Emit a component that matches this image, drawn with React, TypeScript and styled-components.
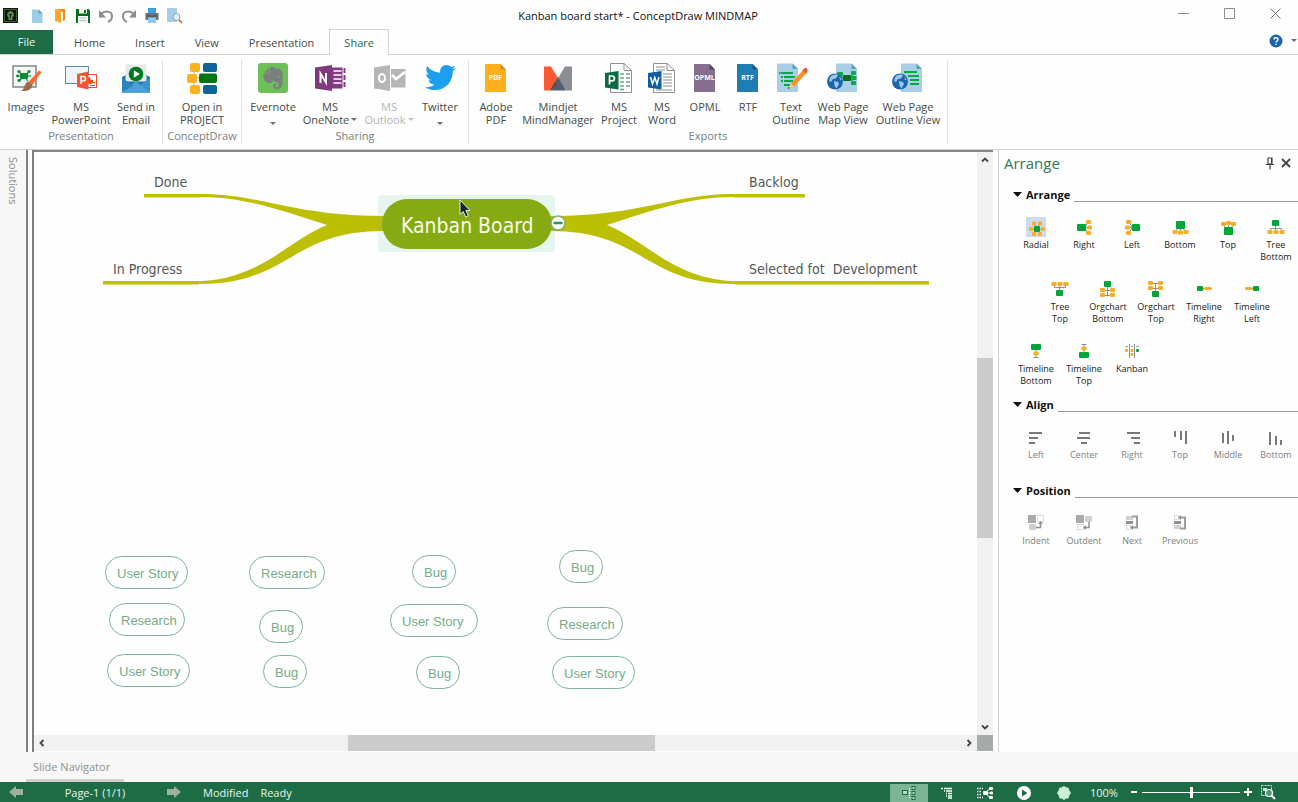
import React from "react";
import styled, { createGlobalStyle, css } from "styled-components";
import { FaEvernote, FaTwitter } from "react-icons/fa";

const GREEN = "#1d6c45";
const LEAF = "#00a637";
const AMBER = "#fbab26";
const INK = "#464a4a";

const GlobalStyle = createGlobalStyle`
  * { box-sizing: border-box; }
  body {
    margin: 0;
    font-family: "Open Sans", "Noto Sans", sans-serif;
    font-size: 11px;
    color: ${INK};
    background: #fdfefd;
  }
  button {
    font: inherit;
    color: inherit;
    background: none;
    border: 0;
    padding: 0;
    cursor: default;
  }
  svg { display: block; flex: none; }
`;

const Window = styled.div`
  display: flex;
  flex-direction: column;
  min-height: 100vh;
`;

/* ---------- title bar ---------- */

const TitleBar = styled.header`
  display: flex;
  height: 29px;
  flex: none;
`;

const QuickAccess = styled.div`
  display: flex;
  align-items: center;
  padding: 2px 0 0 2px;
`;

const QuickButton = styled.button`
  display: grid;
  place-items: center;
  width: 23px;
  height: 24px;
`;

const AppBadge = styled.div`
  margin-right: 6px;
`;

const Title = styled.h1`
  flex: 1;
  margin: 0;
  padding: 2px 70px 0 0;
  font-size: 11px;
  line-height: 27px;
  font-weight: 400;
  text-align: center;
  color: #111;
  white-space: nowrap;
`;

const CaptionButton = styled.button`
  display: grid;
  place-items: center;
  width: 46px;
  height: 27px;
`;

/* ---------- tabs ---------- */

const TabStrip = styled.nav`
  display: flex;
  flex: none;
  height: 26px;
  border-bottom: 1px solid #d2d4d4;
`;

const FileTab = styled.button`
  width: 53px;
  height: 24px;
  margin: 1px 6px 0 0;
  padding-bottom: 2px;
  background: ${GREEN};
  color: #eef6f0;
`;

const Tab = styled.button<{ $active?: boolean }>`
  height: 26px;
  padding: 0 14px 1px;
  border: 1px solid transparent;
  border-bottom: 0;
  ${(p) =>
    p.$active &&
    css`
      color: ${GREEN};
      border-color: #d2d4d4;
      background: #fdfefd;
    `}
`;

const HelpArea = styled.div`
  display: flex;
  align-items: center;
  gap: 8px;
  margin-left: auto;
  padding: 0 1px 2px 0;
`;

/* ---------- ribbon ---------- */

const Ribbon = styled.section`
  display: flex;
  flex: none;
  height: 95px;
  padding-top: 5px;
  border-bottom: 1px solid #cfd1d1;
`;

const Group = styled.div<{ $pad: number }>`
  display: flex;
  flex-direction: column;
  height: 84px;
  padding: 2px ${(p) => p.$pad}px 0;
  border-right: 1px solid #e0e2e2;
`;

const GroupItems = styled.div`
  display: flex;
  height: 67px;
`;

const GroupName = styled.div`
  line-height: 14px;
  text-align: center;
  color: #7b7e7e;
  white-space: nowrap;
`;

const Tool = styled.button<{ $width: number }>`
  display: flex;
  flex-direction: column;
  align-items: center;
  gap: 6px;
  width: ${(p) => p.$width}px;
  line-height: 13px;
  white-space: nowrap;
  &:disabled { color: #b4b6b6; }
`;

const ToolLine = styled.span`
  display: flex;
  align-items: center;
  justify-content: center;
  height: 13px;
  gap: 2px;
`;

const Caret = styled.i<{ $low?: boolean }>`
  border: 3px solid transparent;
  border-top-color: currentColor;
  border-bottom: 0;
  opacity: 0.8;
  margin-top: ${(p) => (p.$low ? 8 : 0)}px;
`;

/* ---------- workspace ---------- */

const Workspace = styled.main`
  display: flex;
  flex: 1;
  min-height: 0;
`;

const Solutions = styled.aside`
  width: 26px;
  padding: 7px 5px;
  background: #f6f7f6;
  writing-mode: vertical-rl;
  line-height: 16px;
  color: #8b8e8c;
`;

const Splitter = styled.div`
  width: 8px;
  flex: none;
  border: 2px solid #7d7f7e;
  border-top: 0;
  border-bottom: 0;
`;

const Editor = styled.div`
  display: grid;
  flex: 1;
  min-width: 0;
  grid-template-columns: minmax(0, 1fr) 16px;
  grid-template-rows: minmax(0, 1fr) 16px;
  border-top: 2px solid #858786;
  margin: 0 5px 1px 0;
`;

const Canvas = styled.div`
  position: relative;
  min-height: 583px;
  overflow: hidden;
`;

const MapDrawing = styled.svg`
  position: absolute;
  left: 66px;
  top: 28px;
`;

const Topic = styled.div<{ $x: number; $y: number }>`
  position: absolute;
  left: ${(p) => p.$x}px;
  top: ${(p) => p.$y}px;
  font-family: "DejaVu Sans Condensed", "DejaVu Sans", sans-serif;
  font-size: 14px;
  line-height: 18px;
  white-space: pre;
  color: #55595a;
`;

const RootTopic = styled(Topic)`
  font-size: 21px;
  line-height: 26px;
  color: #f5fbe6;
`;

const Card = styled.div<{ $x: number; $y: number; $w: number }>`
  position: absolute;
  left: ${(p) => p.$x}px;
  top: ${(p) => p.$y}px;
  width: ${(p) => p.$w}px;
  height: 33px;
  padding: 1px 0 0 11px;
  border: 1px solid #7fb397;
  border-radius: 17px;
  font-family: "Liberation Sans", Arial, sans-serif;
  font-size: 13px;
  line-height: 32px;
  white-space: nowrap;
  color: #76ac88;
`;

const Pointer = styled.svg`
  position: absolute;
  left: 425px;
  top: 47px;
`;

const ScrollTrack = styled.div<{ $vertical?: boolean }>`
  display: flex;
  flex-direction: ${(p) => (p.$vertical ? "column" : "row")};
  background: #f1f1f1;
`;

const ScrollArrow = styled.button`
  display: grid;
  place-items: center;
  width: 16px;
  height: 16px;
`;

const ScrollSpace = styled.div<{ $grow: number }>`
  flex: ${(p) => p.$grow} 0 0;
`;

const ScrollThumb = styled.div<{ $grow: number }>`
  flex: ${(p) => p.$grow} 0 0;
  background: #cccccc;
`;

const Corner = styled.div`
  background: #a7aba7;
`;

/* ---------- arrange panel ---------- */

const Panel = styled.aside`
  width: 300px;
  flex: none;
  overflow: hidden;
  border-left: 1px solid #cfd1d0;
`;

const PanelHead = styled.div`
  display: flex;
  align-items: center;
  gap: 6px;
  height: 26px;
  margin-bottom: 9px;
  padding: 0 7px 0 5px;
`;

const PanelTitle = styled.h2`
  flex: 1;
  margin: 0;
  font-size: 15px;
  font-weight: 400;
  color: #33785a;
`;

const Section = styled.section`
  margin-bottom: 8px;
`;

const SectionHead = styled.h3`
  display: flex;
  align-items: center;
  gap: 4px;
  height: 18px;
  margin: 0 0 14px;
  padding-left: 14px;
  font-size: 11px;
  font-weight: 700;
  color: #111;
  &::after {
    content: "";
    flex: 1;
    align-self: flex-end;
    height: 1px;
    margin-bottom: 1px;
    background: #989a99;
  }
`;

const Rows = styled.div`
  display: flex;
  flex-direction: column;
  gap: 16px;
`;

const Row = styled.div<{ $indent?: boolean }>`
  display: flex;
  padding-left: ${(p) => (p.$indent ? 37 : 13)}px;
`;

const Choice = styled.button<{ $muted?: boolean }>`
  display: flex;
  flex: none;
  flex-direction: column;
  align-items: center;
  gap: 2px;
  width: 48px;
  min-height: 46px;
  font-size: 9px;
  line-height: 12px;
  white-space: pre-line;
  color: ${(p) => (p.$muted ? "#7d807f" : "#222")};
`;

/* ---------- bottom ---------- */

const Tray = styled.div`
  display: flex;
  flex: none;
  height: 30px;
  padding-left: 26px;
  background: #f6f7f6;
`;

const TrayTab = styled.button`
  height: 30px;
  padding: 1px 14px 0 7px;
  border-bottom: 3px solid #cfd1d0;
  color: #8f9291;
  line-height: 25px;
`;

const StatusBar = styled.footer`
  display: flex;
  align-items: center;
  flex: none;
  height: 20px;
  padding: 0 22px 0 9px;
  background: ${GREEN};
  color: #eaf4ee;
  white-space: nowrap;
`;

const PageName = styled.span`
  width: 144px;
  text-align: center;
`;

const StatusMessages = styled.div`
  display: flex;
  gap: 12px;
  margin-left: 22px;
`;

const StatusTools = styled.div`
  display: flex;
  align-items: center;
  margin-left: auto;
`;

const ViewButton = styled.button<{ $active?: boolean; $wide?: boolean }>`
  display: grid;
  place-items: center;
  width: ${(p) => (p.$wide ? 40 : 38)}px;
  height: 18px;
  margin-top: 2px;
  background: ${(p) => (p.$active ? "#7cb595" : "none")};
`;

const ZoomValue = styled.output`
  width: 38px;
  margin-left: 6px;
`;

const ZoomStep = styled.button`
  display: grid;
  place-items: center;
  width: 12px;
  height: 20px;
`;

const ZoomSlider = styled.input`
  appearance: none;
  width: 98px;
  height: 12px;
  margin: 0 2px;
  background: linear-gradient(#fff, #fff) center / 100% 1px no-repeat;
  &::-webkit-slider-thumb {
    appearance: none;
    width: 3px;
    height: 11px;
    background: #fff;
  }
`;

const FitButton = styled.button`
  margin-left: 6px;
`;

/* ---------- ribbon icons ---------- */

const Art = ({ children }: { children: React.ReactNode }) => (
  <svg width="36" height="32" viewBox="0 0 36 32" aria-hidden="true">
    {children}
  </svg>
);

const IconImages = () => (
  <Art>
    <rect x="5" y="4" width="23" height="21" fill="#f4f6f5" stroke="#8b8e8e" strokeWidth="1.6" />
    <g stroke="#0c8a34" strokeWidth="1.2" fill="#0c8a34">
      <path d="M10 9.500l6 4.500M22 9l-6 5M9 14h14M11 19l5-5M20 19l-4-5" />
      <rect x="12.500" y="11.500" width="7" height="5" rx="1" />
      <circle cx="11" cy="9.500" r="1" />
      <circle cx="21" cy="9.500" r="1" />
      <circle cx="11" cy="18.500" r="1" />
      <circle cx="9.500" cy="14" r=".8" />
    </g>
    <path d="M31 8.500l2.500 1.500-9 13-4-3z" fill="#ff6a33" />
    <path d="M20.500 19.500l4 3.500c-1 5-5 6.500-11.500 6 4-2 3-8 7.500-9.500z" fill="#9a6a4c" />
  </Art>
);

const IconPowerPoint = () => (
  <Art>
    <rect x="2.500" y="4.500" width="23" height="17" fill="#eef4fa" stroke="#4d8fa8" />
    <rect x="24" y="12.500" width="9.500" height="13" fill="#fff" stroke="#e8512b" />
    <path d="M27 15.500a3 3 0 103 3h-3zM27 23.500h5M29 20.500h3" fill="#e8512b" stroke="#e8512b" />
    <path d="M14 12l11.500-2.500v18L14 25z" fill="#fb5430" />
    <path d="M18 22v-7.500h2.200a2.200 2.200 0 010 4.500H18" fill="none" stroke="#fff" strokeWidth="1.500" />
  </Art>
);

const IconEmail = () => (
  <Art>
    <path d="M4 15L18 8l14 7v15.500H4z" fill="#1f74ad" />
    <path d="M7.500 2.500h21v17H7.500z" fill="#e4e9ea" />
    <path d="M4 16l14 9.500L32 16v14.500H4z" fill="#3b93cd" />
    <path d="M4 30.500l14-11 14 11z" fill="#4aa0d8" />
    <path d="M4 16l11 7.500-11 7z" fill="#2b84be" />
    <circle cx="18" cy="12" r="7.300" fill="#007a1d" />
    <path d="M15.800 8.300v7.400l6-3.700z" fill="#fff" />
  </Art>
);

const IconOpenProject = () => (
  <Art>
    <path d="M10 9v4M12 16h4M10 20v4" stroke="#a8b8a0" />
    <g fill="#fdb022">
      <rect x="6" y="1" width="10" height="9" rx="2" />
      <rect x="3" y="12" width="10" height="9" rx="2" />
      <rect x="6" y="23" width="10" height="9" rx="2" />
    </g>
    <g fill="#0e6499">
      <rect x="19" y="1" width="14" height="9" rx="2" />
      <rect x="19" y="23" width="14" height="9" rx="2" />
    </g>
    <rect x="15" y="11.500" width="18" height="9.500" rx="2" fill="#007512" />
  </Art>
);

const IconEvernote = () => (
  <Art>
    <rect x="3" y="1" width="30" height="30" rx="3" fill="#6dbf58" />
    <FaEvernote x="5" y="3" size={26} color="#7a807d" />
  </Art>
);

const IconOneNote = () => (
  <Art>
    <path d="M20 5.500h10.500v21H20z" fill="#843a87" />
    <path d="M21.500 9h8M21.500 13h8M21.500 17h8M21.500 21h8" stroke="#fff" strokeWidth="1.700" />
    <path d="M31.500 6h2v5h-2zM31.500 13h2v5h-2zM31.500 20h2v5h-2z" fill="#843a87" />
    <path d="M3 5.500L20 3v26L3 26.500z" fill="#80397f" />
    <path d="M8.500 21v-9.500l5.500 9v-9.500" fill="none" stroke="#fff" strokeWidth="2" />
  </Art>
);

const IconOutlook = () => (
  <Art>
    <path d="M20 7h14.500v18.500H20z" fill="#b5b7b6" />
    <path d="M21 13l4 4 9-7" fill="none" stroke="#fff" strokeWidth="2.500" />
    <path d="M3 5.500L19 3v26L3 26.500z" fill="#b5b7b6" />
    <ellipse cx="11" cy="16" rx="3" ry="4" fill="none" stroke="#fff" strokeWidth="2" />
  </Art>
);

const IconTwitter = () => (
  <Art>
    <FaTwitter x="3" y="0" size={31} color="#1d9ff0" />
  </Art>
);

const Badge = styled.text`
  font-family: "Open Sans", sans-serif;
  font-weight: 700;
  text-anchor: middle;
  fill: #fff;
`;

const IconFile = ({ name, fill, fold }: { name: string; fill: string; fold: string }) => (
  <Art>
    <path d="M7 2h15.500l5.500 5.500V30H7z" fill={fill} />
    <path d="M22.500 2v5.500H28z" fill={fold} />
    <Badge x="17.500" y="18" fontSize="7">
      {name}
    </Badge>
  </Art>
);

const IconMindjet = () => (
  <Art>
    <path d="M4 4.500h7L18 16 10 28.500H4z" fill="#fb5a32" />
    <path d="M32 4.500h-7L18 16l8 12.500h6z" fill="#8b8f93" />
    <path d="M18 15l8 13.500H10z" fill="#50606c" />
    <path d="M14.500 20l3.500 3-8 5.500z" fill="#6a4b4b" />
  </Art>
);

const OfficePage = ({ fill, children }: { fill: string; children: React.ReactNode }) => (
  <Art>
    <path d="M9.500 1.500H23l7.500 7v22h-21z" fill="#fff" stroke="#8d9190" />
    <path d="M23 1.500v7h7.500" fill="none" stroke="#8d9190" />
    <path d="M4 11l13.500-2v18.500L4 25.500z" fill={fill} />
    {children}
  </Art>
);

const IconProject = () => (
  <OfficePage fill="#0a6b41">
    <path d="M19 12h4M25 12h4M19 16h4M25 16h4M19 20h4M25 20h4M19 24h4M25 24h4M19 27.500h4" stroke="#6aa98a" strokeWidth="1.400" />
    <path d="M8.500 22.500v-8.500h2.500a2.300 2.300 0 010 4.800H8.500" fill="none" stroke="#fff" strokeWidth="1.700" />
  </OfficePage>
);

const IconWord = () => (
  <OfficePage fill="#0d5ea0">
    <path d="M12 5h9M12 8h9M19 12h9M19 15h9M19 18h9M19 21h9M19 24h9M12 28h16" stroke="#8d9190" strokeWidth="1.200" />
    <path d="M6.500 15l2 7 2.300-6.500 2.200 6.500 2-7" fill="none" stroke="#fff" strokeWidth="1.500" />
  </OfficePage>
);

const Page = ({ x }: { x: number }) => (
  <g transform={`translate(${x} 0)`}>
    <path d="M0 1.500h15.500l5.500 5.500V30H0z" fill="#a9cfe6" />
    <path d="M15.500 1.500V7H21z" fill="#5f9fc4" />
  </g>
);

const Globe = () => (
  <g>
    <circle cx="10" cy="19.500" r="8" fill="#1a66ac" />
    <path d="M5 15.500c2-3 5-3.500 8-2.500l-2 3.500-3 .5-2 3-2-1zM9 19l4 1 1 2-2.500 4.500-2-3zM14.500 14.500l2 3-1.500 1z" fill="#9cc7e8" />
  </g>
);

const IconTextOutline = () => (
  <Art>
    <Page x={4} />
    <path d="M8 11h12M11 15h11M11 19h9M11 23h7" stroke="#0ca545" strokeWidth="2" />
    <path d="M6 11h1.500M8 15h2M8 19h2" stroke="#0ca545" strokeWidth="2" />
    <path d="M18 21.500L31 7l3.500 3L21 24.500l-6 2.500z" fill="#f89423" />
    <path d="M29.500 8.500L31.500 6c1.500-1 4 1 3 3l-2 2.500z" fill="#ef5a45" />
    <path d="M18 21.500l3 3-6.500 2.500z" fill="#f3cf9a" />
    <path d="M15.600 24.800l1.400 1.300-2.500.9z" fill="#444" />
  </Art>
);

const IconWebMap = () => (
  <Art>
    <Page x={11} />
    <path d="M18 16l-3-4M25 16l4-5M25 16h5M25 16l4 5" stroke="#0a7a2a" />
    <g fill="#0ca545">
      <rect x="12" y="10" width="6" height="4" rx="1" />
      <rect x="26" y="9" width="5" height="4" rx="1" />
      <rect x="26.500" y="14" width="5" height="4" rx="1" />
      <rect x="26" y="19" width="5" height="4" rx="1" />
    </g>
    <rect x="18" y="13" width="8" height="6" rx="1" fill="#00701b" />
    <Globe />
  </Art>
);

const IconWebOutline = () => (
  <Art>
    <Page x={11} />
    <path d="M14 10h13M18 14h11M20 18h9M20 22h9" stroke="#0ca545" strokeWidth="1.800" />
    <Globe />
  </Art>
);

/* ---------- panel icons ---------- */

const SmallArt = ({ bg, children }: { bg?: string; children: React.ReactNode }) => (
  <svg width="20" height="20" viewBox="0 0 20 20" aria-hidden="true">
    {bg && <rect width="20" height="20" fill={bg} />}
    {children}
  </svg>
);

type Rect = [number, number, number, number];

const Diagram = ({
  root,
  nodes,
  lines,
  bg,
  size = [5, 4],
}: {
  root: Rect;
  nodes: [number, number][];
  lines: string;
  bg?: string;
  size?: [number, number];
}) => (
  <SmallArt bg={bg}>
    <path d={lines} stroke="#8b918f" fill="none" />
    <rect x={root[0]} y={root[1]} width={root[2]} height={root[3]} rx="1" fill={LEAF} />
    {nodes.map(([x, y], i) => (
      <rect key={i} x={x - size[0] / 2} y={y - size[1] / 2} width={size[0]} height={size[1]} rx="1.200" fill={AMBER} />
    ))}
  </SmallArt>
);

const layouts: { name: string; icon: React.ReactNode }[][] = [
  [
    {
      name: "Radial",
      icon: (
        <Diagram
          bg="#cbdcf0"
          root={[8, 9, 6, 6]}
          size={[4, 4]}
          nodes={[[8, 6.5], [14, 6.5], [5, 12], [17, 12], [8, 17], [14, 17]]}
          lines="M8 6l6 12M14 6L8 18M4 12h14"
        />
      ),
    },
    { name: "Right", icon: <Diagram root={[3, 7, 9, 7]} nodes={[[14.5, 5], [15.5, 10.5], [14.5, 16]]} lines="M11 10l3-5M11 10.500h5M11 11l3 5" /> },
    { name: "Left", icon: <Diagram root={[10, 7, 8, 7]} nodes={[[6.5, 5], [5.5, 10.5], [6.5, 16]]} lines="M10 10L7 5M10 10.500H5M10 11l-3 5" /> },
    { name: "Bottom", icon: <Diagram root={[6, 4, 9, 8]} nodes={[[5, 15], [10.5, 15.5], [16, 15]]} lines="M8 11l-3 4M10.500 11v4M13 11l3 4" /> },
    { name: "Top", icon: <Diagram root={[6, 10, 9, 8]} nodes={[[5.5, 7], [10.5, 6], [15.5, 7]]} lines="M8 11L5 7M10.500 11V6M13 11l3-4" /> },
    { name: "Tree\nBottom", icon: <Diagram root={[6, 3, 7, 6]} nodes={[[4, 15], [10, 15], [16, 15]]} lines="M9.500 8v7M4.500 14v-2.500h11V14" /> },
  ],
  [
    { name: "Tree\nTop", icon: <Diagram root={[6, 11, 7, 6]} nodes={[[4, 5], [10, 5], [16, 5]]} lines="M9.500 12V5M4.500 6v2.500h11V6" /> },
    { name: "Orgchart\nBottom", icon: <Diagram root={[6, 2, 7, 6]} nodes={[[4.5, 11], [14.5, 11], [4.5, 16], [14.5, 16]]} lines="M9.500 7v9.500M5 11.500h9M5 16.500h9" /> },
    { name: "Orgchart\nTop", icon: <Diagram root={[6, 12, 7, 6]} nodes={[[4.5, 4], [14.5, 4], [4.5, 9], [14.5, 9]]} lines="M9.500 13V4M5 4.500h9M5 9.500h9" /> },
    { name: "Timeline\nRight", icon: <Diagram root={[3, 7, 6, 5]} size={[4, 3]} nodes={[[12, 9.5], [15.5, 9.5]]} lines="M9 9.500h9" /> },
    { name: "Timeline\nLeft", icon: <Diagram root={[11, 7, 6, 5]} size={[4, 3]} nodes={[[8.5, 9.5], [5, 9.5]]} lines="M11 9.500H3" /> },
  ],
  [
    { name: "Timeline\nBottom", icon: <Diagram root={[5, 3, 10, 6]} nodes={[[10, 12.5]]} lines="M10 9v8M7.500 16.500h5" /> },
    { name: "Timeline\nTop", icon: <Diagram root={[5, 11, 10, 6]} nodes={[[10, 7.5]]} lines="M10 11V3M7.500 3.500h5" /> },
    {
      name: "Kanban",
      icon: (
        <SmallArt>
          <path d="M7.500 3v14M12.500 3v14" stroke="#8b918f" />
          <path d="M3 5.500h3M9 5.500h2M14 5.500h3" stroke="#9aa09e" />
          <g fill={AMBER}>
            <rect x="3" y="8" width="3" height="3" rx="1" />
            <rect x="8.500" y="8" width="3" height="3" rx="1" />
            <rect x="8.500" y="12" width="3" height="3" rx="1" />
          </g>
          <rect x="14" y="8" width="3" height="3" rx="1" fill={LEAF} />
        </SmallArt>
      ),
    },
  ],
];

const Bars = ({ d }: { d: string }) => (
  <SmallArt>
    <path d={d} stroke="#757978" strokeWidth="2" />
  </SmallArt>
);

const alignments = [
  { name: "Left", d: "M3 6h13M3 11h9M3 16h6" },
  { name: "Center", d: "M5 6h11M3 11h13M7 16h6" },
  { name: "Right", d: "M5 6h13M9 11h9M12 16h6" },
  { name: "Top", d: "M5 4v6M11 4v9M16 4v13" },
  { name: "Middle", d: "M5 6v10M10 4v13M15 8v6" },
  { name: "Bottom", d: "M4 5v13M10 9v9M15 13v5" },
];

const positions = [
  {
    name: "Indent",
    icon: (
      <SmallArt>
        <rect x="2" y="2" width="8" height="8" fill="#a9acab" />
        <rect x="11.500" y="2.500" width="6" height="6" fill="none" stroke="#b9bcbb" strokeDasharray="1 1" />
        <rect x="3" y="11" width="7" height="6" rx="1" fill="#cfd1d0" />
        <path d="M10 14.500h4.500V9" fill="none" stroke="#8e9190" strokeWidth="1.500" />
        <path d="M12 11l2.500-3 2.500 3z" fill="#8e9190" />
      </SmallArt>
    ),
  },
  {
    name: "Outdent",
    icon: (
      <SmallArt>
        <rect x="2" y="2" width="8" height="8" fill="#a9acab" />
        <rect x="11" y="3" width="7" height="6" rx="1" fill="#cfd1d0" />
        <rect x="3.500" y="11.500" width="6" height="5" fill="none" stroke="#b9bcbb" strokeDasharray="1 1" />
        <path d="M15 9v5.500h-4" fill="none" stroke="#8e9190" strokeWidth="1.500" />
        <path d="M12 12l-3 2.500 3 2.500z" fill="#8e9190" />
      </SmallArt>
    ),
  },
  {
    name: "Next",
    icon: (
      <SmallArt>
        <rect x="4" y="3" width="7" height="4" rx="1" fill="#cfd1d0" />
        <rect x="4" y="8" width="7" height="3" fill="#8e9190" />
        <rect x="4.500" y="12.500" width="4" height="4" fill="none" stroke="#b9bcbb" strokeDasharray="1 1" />
        <path d="M10 3.500h5v11h-5" fill="none" stroke="#9a9d9c" strokeWidth="2" />
        <path d="M11 12l-3 2.500 3 2.500z" fill="#8e9190" />
      </SmallArt>
    ),
  },
  {
    name: "Previous",
    icon: (
      <SmallArt>
        <rect x="4.500" y="2.500" width="4" height="4" fill="none" stroke="#b9bcbb" strokeDasharray="1 1" />
        <rect x="4" y="8" width="7" height="3" fill="#8e9190" />
        <rect x="4" y="12" width="7" height="4" rx="1" fill="#cfd1d0" />
        <path d="M10 4.500h5v11h-5" fill="none" stroke="#9a9d9c" strokeWidth="2" />
        <path d="M11 2L8 4.500 11 7z" fill="#8e9190" />
      </SmallArt>
    ),
  },
];

/* ---------- title bar icons ---------- */

const Mini = ({ label, children }: { label: string; children: React.ReactNode }) => (
  <QuickButton aria-label={label}>
    <svg width="16" height="16" viewBox="0 0 16 16">
      {children}
    </svg>
  </QuickButton>
);

/* ---------- ribbon data ---------- */

type ToolItem = {
  lines: string[];
  width: number;
  icon: React.ReactNode;
  menu?: "below" | "inline";
  disabled?: boolean;
};

const groups: { name: string; pad: number; items: ToolItem[] }[] = [
  {
    name: "Presentation",
    pad: 1,
    items: [
      { lines: ["Images"], width: 50, icon: <IconImages /> },
      { lines: ["MS", "PowerPoint"], width: 60, icon: <IconPowerPoint /> },
      { lines: ["Send in", "Email"], width: 50, icon: <IconEmail /> },
    ],
  },
  {
    name: "ConceptDraw",
    pad: 4,
    items: [{ lines: ["Open in", "PROJECT"], width: 70, icon: <IconOpenProject /> }],
  },
  {
    name: "Sharing",
    pad: 5,
    items: [
      { lines: ["Evernote"], width: 52, icon: <IconEvernote />, menu: "below" },
      { lines: ["MS", "OneNote"], width: 62, icon: <IconOneNote />, menu: "inline" },
      { lines: ["MS", "Outlook"], width: 56, icon: <IconOutlook />, menu: "inline", disabled: true },
      { lines: ["Twitter"], width: 46, icon: <IconTwitter />, menu: "below" },
    ],
  },
  {
    name: "Exports",
    pad: 4,
    items: [
      { lines: ["Adobe", "PDF"], width: 46, icon: <IconFile name="PDF" fill="#fdb01c" fold="#d08c3a" /> },
      { lines: ["Mindjet", "MindManager"], width: 78, icon: <IconMindjet /> },
      { lines: ["MS", "Project"], width: 44, icon: <IconProject /> },
      { lines: ["MS", "Word"], width: 42, icon: <IconWord /> },
      { lines: ["OPML"], width: 44, icon: <IconFile name="OPML" fill="#846f90" fold="#52455c" /> },
      { lines: ["RTF"], width: 42, icon: <IconFile name="RTF" fill="#1f7db3" fold="#125a86" /> },
      { lines: ["Text", "Outline"], width: 44, icon: <IconTextOutline /> },
      { lines: ["Web Page", "Map View"], width: 60, icon: <IconWebMap /> },
      { lines: ["Web Page", "Outline View"], width: 70, icon: <IconWebOutline /> },
    ],
  },
];

const cards: { text: string; x: number; y: number; w: number }[] = [
  { text: "User Story", x: 71, y: 404, w: 83 },
  { text: "Research", x: 75, y: 451, w: 76 },
  { text: "User Story", x: 73, y: 502, w: 83 },
  { text: "Research", x: 215, y: 404, w: 76 },
  { text: "Bug", x: 225, y: 458, w: 44 },
  { text: "Bug", x: 229, y: 503, w: 44 },
  { text: "Bug", x: 378, y: 403, w: 44 },
  { text: "User Story", x: 356, y: 452, w: 88 },
  { text: "Bug", x: 382, y: 504, w: 44 },
  { text: "Bug", x: 525, y: 398, w: 44 },
  { text: "Research", x: 513, y: 455, w: 76 },
  { text: "User Story", x: 518, y: 504, w: 83 },
];

const Chevron = ({ turn }: { turn: number }) => (
  <svg width="10" height="10" viewBox="0 0 10 10">
    <path d="M2 3.500l3 3 3-3" fill="none" stroke="#444" strokeWidth="1.800" transform={`rotate(${turn} 5 5)`} />
  </svg>
);

const branch =
  "M194 194h6C262 194 292 216 384 216V231C290 231 290 284 200 284h-7v-2.500C260 281 285 242 327 225 280 210 245 197 200 197h-6z";

export default function App() {
  return (
    <>
      <GlobalStyle />
      <Window>
        <TitleBar>
          <QuickAccess>
            <AppBadge>
              <svg width="17" height="16" viewBox="0 0 17 16">
                <rect x="1" width="15" height="15" fill="#10150f" />
                <rect x="2.500" y="1.500" width="12" height="12" fill="none" stroke="#3f5f35" />
                <path d="M8.500 3a3.500 3.500 0 00-2 6.300V12h4V9.300A3.500 3.500 0 008.500 3z" fill="#5f8f3d" />
                <path d="M7 6.500h3M8.500 6.500V10" stroke="#10150f" />
              </svg>
            </AppBadge>
            <Mini label="New">
              <path d="M3 1.500h6.500l4 4V15H3z" fill="#9fcce6" />
              <path d="M9.500 1.500v4h4z" fill="#5f9fc4" />
            </Mini>
            <Mini label="Open">
              <path d="M3 1h10v11l-2 1V4z" fill="#f08a12" />
              <path d="M3 1l6 2.500V15L3 13z" fill="#fda728" />
            </Mini>
            <Mini label="Save">
              <path d="M1 1h12.500l1.500 1.500V15H1z" fill="#02701d" />
              <path d="M4 1h8v4.500H4z" fill="#f4f6f5" />
              <path d="M9 2h2v3H9z" fill="#02701d" />
              <path d="M3 8h10v7H3z" fill="#f4f6f5" />
              <path d="M4.500 10h7M4.500 12.500h7" stroke="#b9bcbb" />
            </Mini>
            <Mini label="Undo">
              <path d="M3 6c4-4 11-3 11 2 0 3-1.500 5-4 6" fill="none" stroke="#8b8e8e" strokeWidth="2" />
              <path d="M1 2v7.500h7z" fill="#8b8e8e" />
            </Mini>
            <Mini label="Redo">
              <path d="M13 6C9 2 2 3 2 8c0 3 1.500 5 4 6" fill="none" stroke="#8b8e8e" strokeWidth="2" />
              <path d="M15 2v7.500H8z" fill="#8b8e8e" />
            </Mini>
            <Mini label="Print">
              <path d="M4 0h8v5H4z" fill="#3fa0df" />
              <path d="M1.500 5h13v7h-13z" fill="#6d7276" />
              <path d="M4 9.500h8V15H4z" fill="#8ccbf0" />
              <path d="M2 8h12" stroke="#4b5054" />
            </Mini>
            <Mini label="Preview">
              <path d="M0 0h10v14H0z" fill="#a3cfe9" />
              <circle cx="9.500" cy="9" r="3.500" fill="#eaf5fb" stroke="#7f9fae" />
              <path d="M12 12l3 3" stroke="#c98332" strokeWidth="2" />
            </Mini>
          </QuickAccess>
          <Title>Kanban board start* - ConceptDraw MINDMAP</Title>
          <CaptionButton aria-label="Minimize">
            <svg width="11" height="11" viewBox="0 0 11 11">
              <path d="M0 5.500h11" stroke="#8b8e8e" />
            </svg>
          </CaptionButton>
          <CaptionButton aria-label="Maximize">
            <svg width="11" height="11" viewBox="0 0 11 11">
              <path d="M.5.5h10v10H.5z" fill="none" stroke="#8b8e8e" />
            </svg>
          </CaptionButton>
          <CaptionButton aria-label="Close">
            <svg width="11" height="11" viewBox="0 0 11 11">
              <path d="M.5.5l10 10M10.500.5l-10 10" stroke="#777a7a" />
            </svg>
          </CaptionButton>
        </TitleBar>

        <TabStrip>
          <FileTab>File</FileTab>
          <Tab>Home</Tab>
          <Tab>Insert</Tab>
          <Tab>View</Tab>
          <Tab>Presentation</Tab>
          <Tab $active>Share</Tab>
          <HelpArea>
            <button aria-label="Help">
              <svg width="14" height="14" viewBox="0 0 14 14">
                <circle cx="7" cy="7" r="6.500" fill="#1c62ad" />
                <path d="M5 5.500C5 3.200 9 3.200 9 5.500 9 7 7 7 7 8.500M7 9.700V11" fill="none" stroke="#fff" strokeWidth="1.500" />
              </svg>
            </button>
            <Caret />
          </HelpArea>
        </TabStrip>

        <Ribbon>
          {groups.map((group) => (
            <Group key={group.name} $pad={group.pad}>
              <GroupItems>
                {group.items.map((item) => (
                  <Tool key={item.lines.join(" ")} $width={item.width} disabled={item.disabled}>
                    {item.icon}
                    <span>
                      {item.lines.map((line, i) => (
                        <ToolLine key={line}>
                          {line}
                          {item.menu === "inline" && i === item.lines.length - 1 && <Caret />}
                        </ToolLine>
                      ))}
                      {item.menu === "below" && (
                        <ToolLine>
                          <Caret $low />
                        </ToolLine>
                      )}
                    </span>
                  </Tool>
                ))}
              </GroupItems>
              <GroupName>{group.name}</GroupName>
            </Group>
          ))}
        </Ribbon>

        <Workspace>
          <Solutions>Solutions</Solutions>
          <Splitter />
          <Editor>
            <Canvas>
              <MapDrawing width="840" height="120" viewBox="100 180 840 120">
                <g fill="#bdbf05">
                  <rect x="144" y="194" width="56" height="3.500" />
                  <rect x="103" y="281" width="96" height="3.500" />
                  <rect x="734" y="194" width="71" height="3.500" />
                  <rect x="735" y="281" width="194" height="3.500" />
                  <path d={branch} />
                  <path d={branch} transform="translate(934 0) scale(-1 1)" />
                </g>
                <rect x="378" y="195" width="177" height="57" rx="4" fill="#d9efe6" fillOpacity=".6" />
                <rect x="378" y="216" width="10" height="15" fill="#b4bb19" />
                <rect x="545" y="216" width="10" height="15" fill="#b4bb19" />
                <rect x="382" y="199" width="170" height="50" rx="25" fill="#87a912" />
                <circle cx="558" cy="223" r="7" fill="#fff" stroke="#7faf72" strokeWidth="1.500" />
                <path d="M553.500 223h9" stroke="#2f9060" strokeWidth="2.500" />
              </MapDrawing>
              <Topic $x={120} $y={21}>Done</Topic>
              <Topic $x={79} $y={108}>In Progress</Topic>
              <Topic $x={715} $y={21}>Backlog</Topic>
              <Topic $x={715} $y={108}>{"Selected fot  Development"}</Topic>
              <RootTopic $x={367} $y={61}>Kanban Board</RootTopic>
              {cards.map((card, i) => (
                <Card key={i} $x={card.x} $y={card.y} $w={card.w}>
                  {card.text}
                </Card>
              ))}
              <Pointer width="12" height="20" viewBox="0 0 12 20">
                <path d="M1 1v14.500l3.200-3 2.500 5.500 2.600-1.200L6.900 11.500H11z" fill="#10252a" stroke="#e6f2e0" />
              </Pointer>
            </Canvas>
            <ScrollTrack $vertical>
              <ScrollArrow aria-label="Scroll up"><Chevron turn={180} /></ScrollArrow>
              <ScrollSpace $grow={190} />
              <ScrollThumb $grow={180} />
              <ScrollSpace $grow={181} />
              <ScrollArrow aria-label="Scroll down"><Chevron turn={0} /></ScrollArrow>
            </ScrollTrack>
            <ScrollTrack>
              <ScrollArrow aria-label="Scroll left"><Chevron turn={90} /></ScrollArrow>
              <ScrollSpace $grow={298} />
              <ScrollThumb $grow={307} />
              <ScrollSpace $grow={306} />
              <ScrollArrow aria-label="Scroll right"><Chevron turn={-90} /></ScrollArrow>
            </ScrollTrack>
            <Corner />
          </Editor>

          <Panel>
            <PanelHead>
              <PanelTitle>Arrange</PanelTitle>
              <button aria-label="Pin">
                <svg width="10" height="13" viewBox="0 0 10 13">
                  <path d="M3 1h4v6H3zM1 7.500h8M5 8v4.500M6.500 1v6" fill="none" stroke="#444" strokeWidth="1.200" />
                </svg>
              </button>
              <button aria-label="Close panel">
                <svg width="10" height="10" viewBox="0 0 10 10">
                  <path d="M1 1l8 8M9 1L1 9" stroke="#444" strokeWidth="1.800" />
                </svg>
              </button>
            </PanelHead>
            <Section>
              <PanelSectionHead name="Arrange" />
              <Rows>
                {layouts.map((row, i) => (
                  <Row key={i} $indent={i === 1}>
                    {row.map((item) => (
                      <Choice key={item.name}>
                        {item.icon}
                        <span>{item.name}</span>
                      </Choice>
                    ))}
                  </Row>
                ))}
              </Rows>
            </Section>
            <Section>
              <PanelSectionHead name="Align" />
              <Row>
                {alignments.map((item) => (
                  <Choice key={item.name} $muted>
                    <Bars d={item.d} />
                    <span>{item.name}</span>
                  </Choice>
                ))}
              </Row>
            </Section>
            <Section>
              <PanelSectionHead name="Position" />
              <Row>
                {positions.map((item) => (
                  <Choice key={item.name} $muted>
                    {item.icon}
                    <span>{item.name}</span>
                  </Choice>
                ))}
              </Row>
            </Section>
          </Panel>
        </Workspace>

        <Tray>
          <TrayTab>Slide Navigator</TrayTab>
        </Tray>

        <StatusBar>
          <button aria-label="Previous page">
            <svg width="14" height="12" viewBox="0 0 14 12">
              <path d="M0 6l7-6v3h7v6H7v3z" fill="#9fb0a6" />
            </svg>
          </button>
          <PageName>Page-1 (1/1)</PageName>
          <button aria-label="Next page">
            <svg width="14" height="12" viewBox="0 0 14 12">
              <path d="M14 6L7 0v3H0v6h7v3z" fill="#9fb0a6" />
            </svg>
          </button>
          <StatusMessages>
            <span>Modified</span>
            <span>Ready</span>
          </StatusMessages>
          <StatusTools>
            <ViewButton $active aria-label="Map view">
              <svg width="16" height="14" viewBox="0 0 16 14">
                <path d="M6 7h5M8.500 7V2.500H11M8.500 7v5H11" fill="none" stroke="#fff" strokeDasharray="1 1" />
                <g fill="#b9dbc8" stroke="#1d6c45">
                  <rect x="1.500" y="4.500" width="5" height="4" />
                  <rect x="11" y=".5" width="3" height="3" />
                  <rect x="11" y="5.500" width="3" height="3" />
                  <rect x="11" y="10.500" width="3" height="3" />
                </g>
              </svg>
            </ViewButton>
            <ViewButton aria-label="Outline view">
              <svg width="14" height="12" viewBox="0 0 14 12">
                <path d="M1 1.500h2M4 1.500h8M4 4h1M6 4h6M6 6.500h1M8 6.500h4M6 9h1M8 9h4M8 11h4" stroke="#fff" strokeWidth="1.400" />
              </svg>
            </ViewButton>
            <ViewButton aria-label="Split view">
              <svg width="18" height="14" viewBox="0 0 18 14">
                <path d="M1 2.500h6M1 5.500h4M1 8.500h4M1 11.500h6" stroke="#fff" strokeDasharray="1.500 1" strokeWidth="1.500" />
                <path d="M9 7l5-4.500M9 7h6M9 7l5 4.500" stroke="#fff" />
                <g fill="#fff">
                  <rect x="7" y="5" width="5" height="4" rx="1" />
                  <rect x="13" y="1" width="4" height="3" rx="1" />
                  <rect x="14" y="5.500" width="3" height="3" rx="1" />
                  <rect x="13" y="10" width="4" height="3" rx="1" />
                </g>
              </svg>
            </ViewButton>
            <ViewButton $wide aria-label="Play">
              <svg width="14" height="14" viewBox="0 0 14 14">
                <circle cx="7" cy="7" r="7" fill="#fff" />
                <path d="M5 3.500v7L10.500 7z" fill={GREEN} />
              </svg>
            </ViewButton>
            <ViewButton $wide aria-label="Settings">
              <svg width="14" height="14" viewBox="0 0 14 14">
                <path d="M7 0l2 1.300L11.600 1.700 12.300 4.300 14 7l-1.700 2.500-.7 2.700L9 12.700 7 14l-2-1.300-2.600-.5-.7-2.700L0 7l1.700-2.700.7-2.600L5 1.300z" fill="#c9eed9" />
              </svg>
            </ViewButton>
            <ZoomValue>100%</ZoomValue>
            <ZoomStep aria-label="Zoom out">
              <svg width="8" height="8" viewBox="0 0 8 8"><path d="M1 4h6" stroke="#fff" strokeWidth="2" /></svg>
            </ZoomStep>
            <ZoomSlider type="range" min={0} max={200} defaultValue={100} aria-label="Zoom" />
            <ZoomStep aria-label="Zoom in">
              <svg width="8" height="8" viewBox="0 0 8 8"><path d="M0 4h8M4 0v8" stroke="#fff" strokeWidth="2" /></svg>
            </ZoomStep>
            <FitButton aria-label="Fit to window">
              <svg width="16" height="16" viewBox="0 0 16 16">
                <rect x="1.500" y="1.500" width="10" height="10" fill="none" stroke="#cfe6d9" strokeDasharray="2 1" />
                <path d="M3 4h4v3H3z" fill="#cfe6d9" />
                <circle cx="9" cy="9" r="3.500" fill="#4d9673" stroke="#fff" strokeWidth="1.200" />
                <path d="M11.500 11.500L15 15" stroke="#fff" strokeWidth="2" />
              </svg>
            </FitButton>
          </StatusTools>
        </StatusBar>
      </Window>
    </>
  );
}

function PanelSectionHead({ name }: { name: string }) {
  return (
    <SectionHead>
      <svg width="9" height="8" viewBox="0 0 9 8" aria-hidden="true">
        <path d="M0 2h9L4.500 7z" fill="#111" />
      </svg>
      {name}
    </SectionHead>
  );
}
